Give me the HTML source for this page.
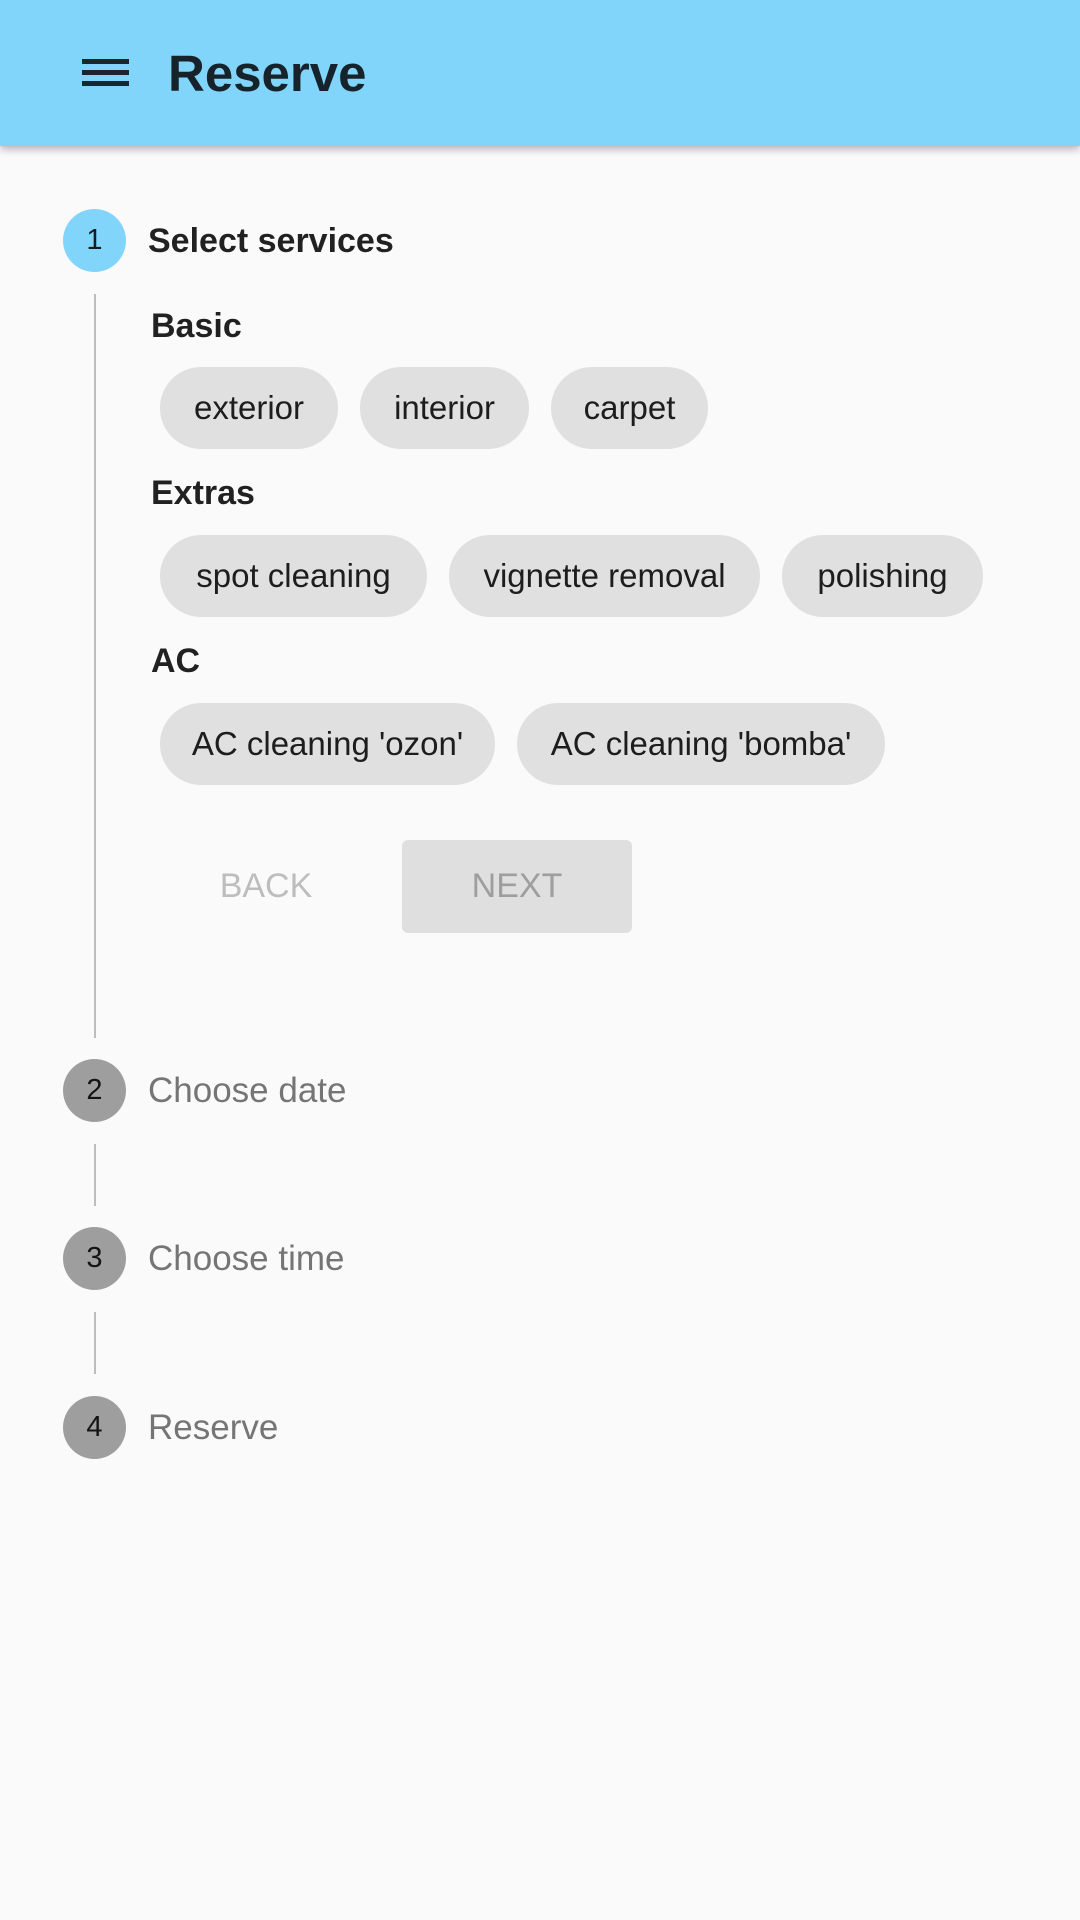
<!DOCTYPE html>
<html><head><meta charset="utf-8"><style>
*{margin:0;padding:0;box-sizing:border-box}
body{width:1080px;height:1920px;background:#fafafa;font-family:"Liberation Sans",Roboto,sans-serif;position:relative;overflow:hidden;color:rgba(0,0,0,.87)}
.bar{position:absolute;left:0;top:0;width:1080px;height:146px;background:#81d4fa;box-shadow:0 3px 8px rgba(0,0,0,.3)}
.ham{position:absolute;left:82px;width:47px;height:5px;background:#1b262c}
.title{position:absolute;left:168px;top:44px;font-size:51px;font-weight:bold;color:#17232a}
.ab{position:absolute}
.circ{position:absolute;width:63px;height:63px;border-radius:50%;left:63px;text-align:center;line-height:63px;font-size:29px;color:rgba(0,0,0,.87)}
.vl{position:absolute;left:94px;width:2px;background:#bdbdbd}
.lbl{position:absolute;left:148px;font-size:35px;line-height:40px}
.h{position:absolute;left:151px;font-size:34px;font-weight:bold;line-height:40px}
.chip{position:absolute;height:82px;border-radius:41px;background:#e0e0e0;font-size:33px;line-height:82px;text-align:center;color:rgba(0,0,0,.87)}
</style></head><body>
<div class="bar">
<div class="ham" style="top:59px"></div><div class="ham" style="top:70px"></div><div class="ham" style="top:81px"></div>
<div class="title">Reserve</div>
</div>
<div class="circ" style="top:209px;background:#81d4fa">1</div>
<div class="lbl" style="top:221px;font-weight:bold;font-size:34px">Select services</div>
<div class="vl" style="top:294px;height:744px"></div>
<div class="h" style="top:306px">Basic</div>
<div class="chip" style="top:367px;left:160px;width:178px">exterior</div>
<div class="chip" style="top:367px;left:360px;width:169px">interior</div>
<div class="chip" style="top:367px;left:551px;width:157px">carpet</div>
<div class="h" style="top:473px">Extras</div>
<div class="chip" style="top:535px;left:160px;width:267px">spot cleaning</div>
<div class="chip" style="top:535px;left:449px;width:311px">vignette removal</div>
<div class="chip" style="top:535px;left:782px;width:201px">polishing</div>
<div class="h" style="top:641px">AC</div>
<div class="chip" style="top:703px;left:160px;width:335px">AC cleaning 'ozon'</div>
<div class="chip" style="top:703px;left:517px;width:368px">AC cleaning 'bomba'</div>
<div class="ab" style="left:190px;top:840px;width:152px;height:93px;line-height:93px;text-align:center;font-size:34px;color:#bdbdbd">BACK</div>
<div class="ab" style="left:402px;top:840px;width:230px;height:93px;line-height:93px;text-align:center;font-size:34px;color:#9e9e9e;background:#dfdfdf;border-radius:6px">NEXT</div>
<div class="circ" style="top:1059px;background:#9e9e9e">2</div>
<div class="lbl" style="top:1071px;color:#757575">Choose date</div>
<div class="vl" style="top:1144px;height:62px"></div>
<div class="circ" style="top:1227px;background:#9e9e9e">3</div>
<div class="lbl" style="top:1239px;color:#757575">Choose time</div>
<div class="vl" style="top:1312px;height:62px"></div>
<div class="circ" style="top:1396px;background:#9e9e9e">4</div>
<div class="lbl" style="top:1408px;color:#757575">Reserve</div>
</body></html>
